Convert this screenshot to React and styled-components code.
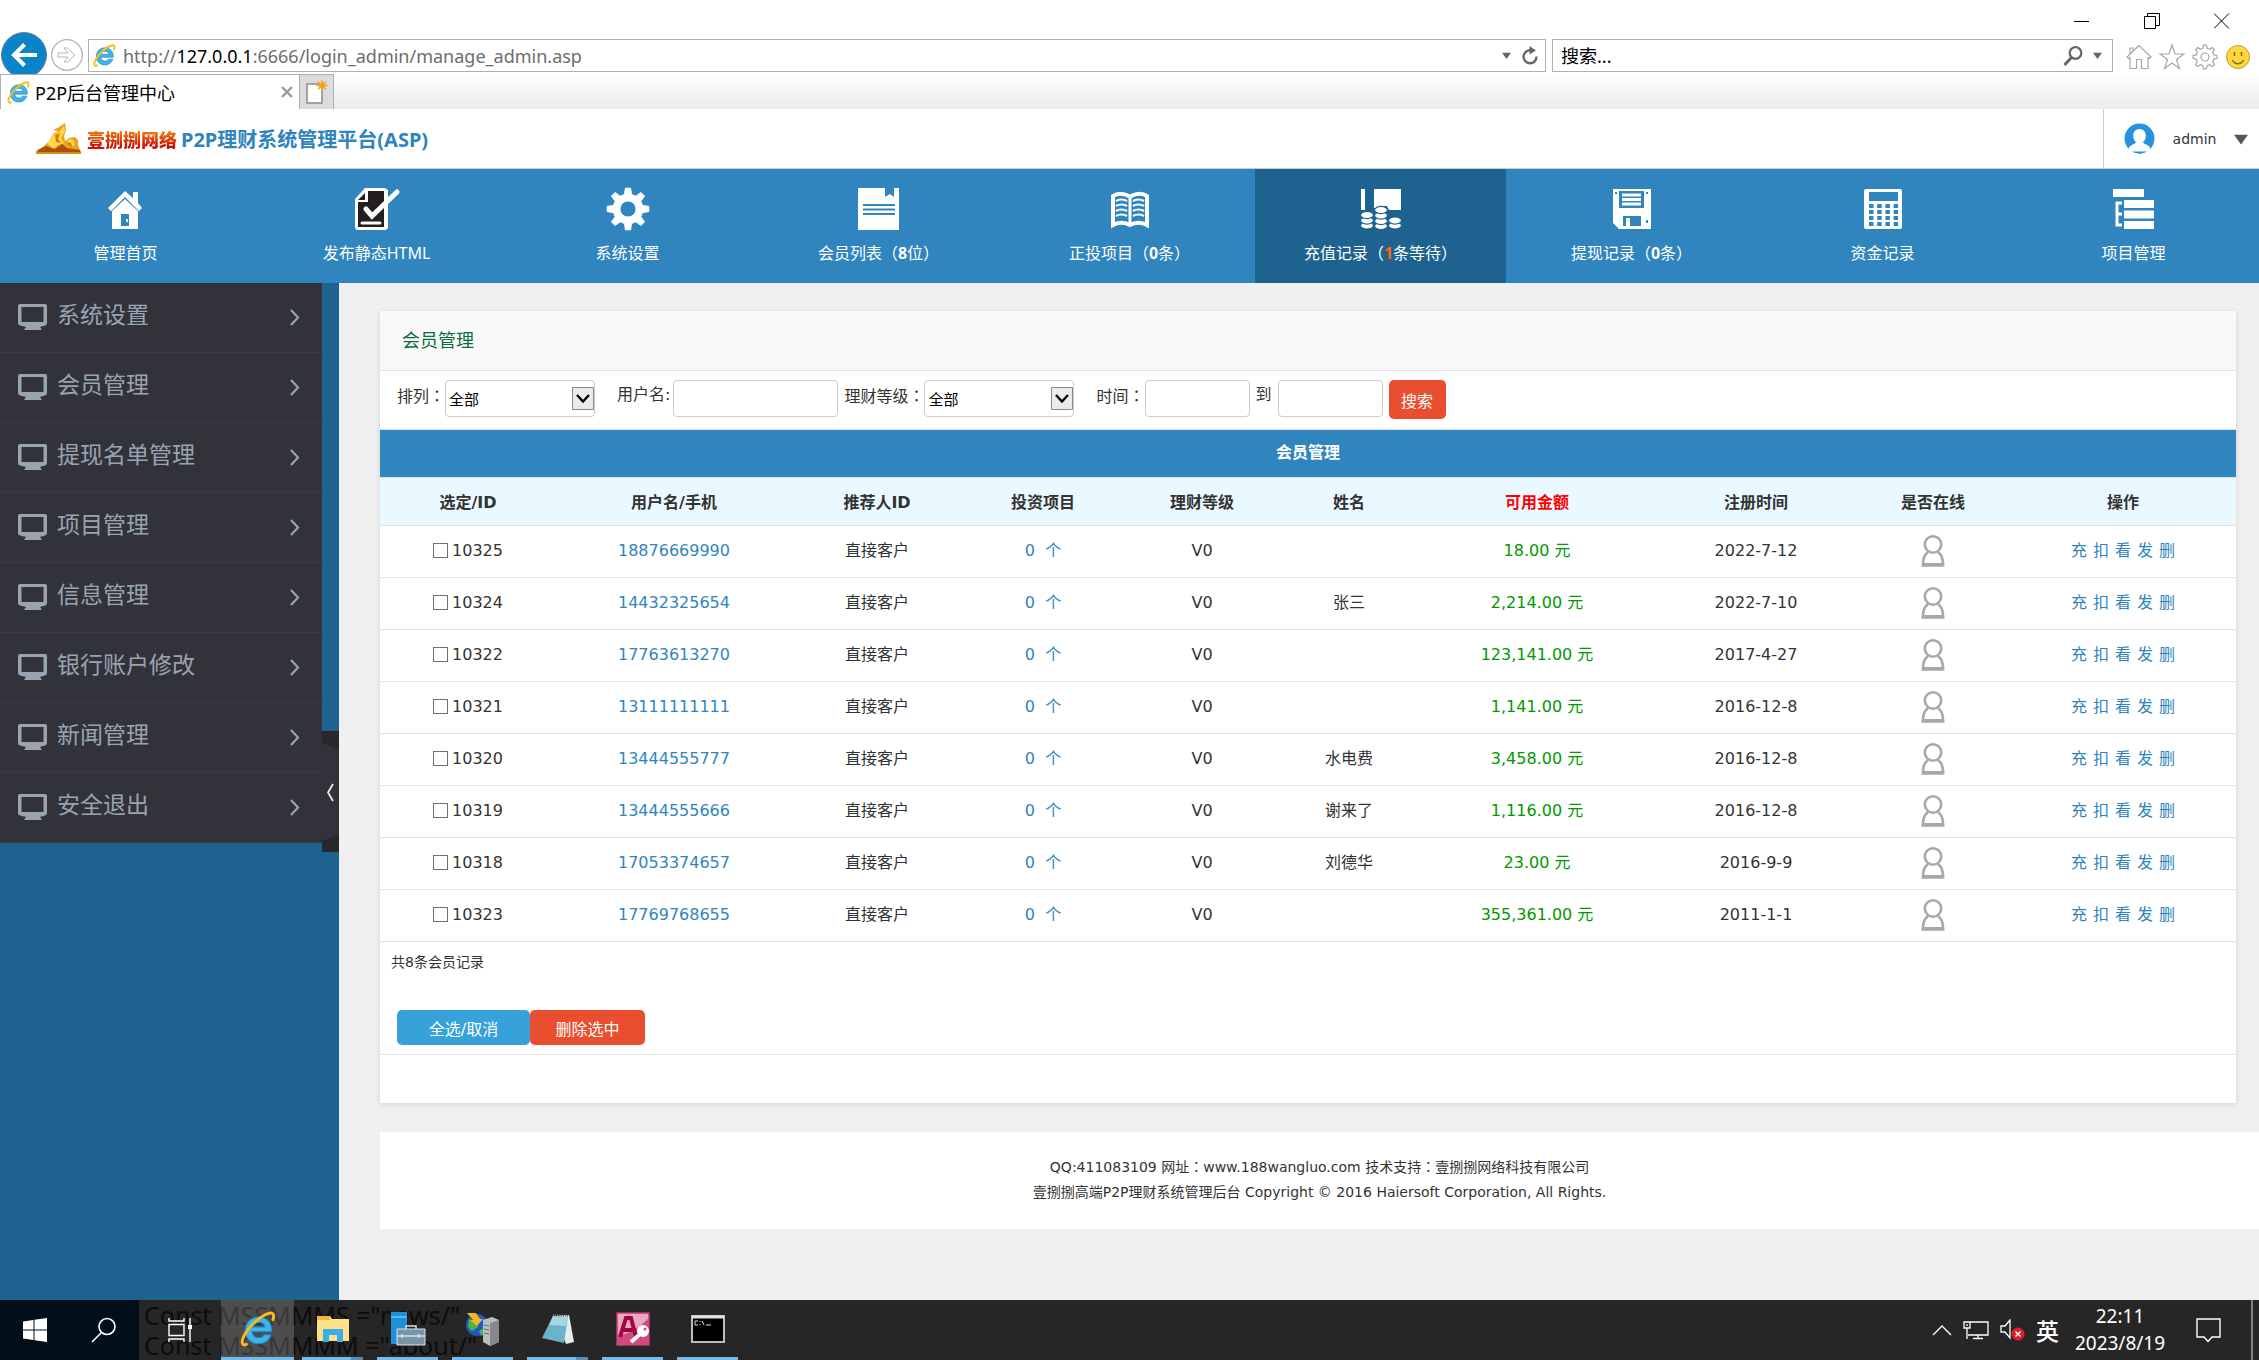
import React, { useState } from "react";
import styled, { createGlobalStyle } from "styled-components";

const GlobalStyle = createGlobalStyle`
  * {
    box-sizing: border-box;
  }

  body {
    margin: 0;
    color: #333;
    background: #f0f0f0;
    font-family: "DejaVu Sans", "Noto Sans CJK SC", sans-serif;
    font-size: 16px;
  }

  button, input, select {
    font-family: inherit;
  }

  a {
    color: #3085be;
    text-decoration: none;
  }
`;

const Page = styled.div`
  min-height: 100vh;
  display: flex;
  flex-direction: column;
`;

/* ---------- browser window ---------- */

const Chrome = styled.div`
  background: white;
  color: black;
  font-family: "Noto Sans", "Noto Sans CJK SC", sans-serif;
`;

const PlainButton = styled.button`
  display: flex;
  align-items: center;
  justify-content: center;
  padding: 0;
  border: 0;
  background: none;
  cursor: pointer;
`;

const TitleBar = styled.div`
  display: flex;
  justify-content: flex-end;
  height: 32px;
  padding: 10px 2px 0 0;
`;

const WindowButton = styled(PlainButton)`
  width: 70px;
  height: 22px;
`;

const AddressRow = styled.div`
  display: flex;
  align-items: flex-end;
  height: 42px;
  padding-left: 1px;
`;

const ForwardButton = styled(PlainButton)`
  width: 34px;
  height: 34px;
  margin: 0 4px 2px 3px;
`;

const AddressBox = styled.div`
  flex: 1;
  display: flex;
  align-items: center;
  height: 33px;
  margin-bottom: 2px;
  padding: 0 6px 0 4px;
  border: 1px solid #b0b0b0;
`;

const AddressText = styled.div`
  flex: 1;
  margin-left: 7px;
  color: #6d6d6d;
  font-size: 18px;
  line-height: 28px;
  white-space: nowrap;
  outline: none;
`;

const Host = styled.span`
  color: black;
`;

const AddressTools = styled.div`
  display: flex;
  align-items: center;
  gap: 10px;
`;

const SearchBox = styled(AddressBox)`
  flex: 0 0 561px;
  margin-left: 6px;
  padding: 0 10px 0 8px;
`;

const SearchInput = styled.input`
  flex: 1;
  padding: 0;
  border: 0;
  outline: none;
  background: none;
  font-size: 18px;

  &::placeholder {
    color: black;
    opacity: 1;
  }
`;

const BrowserTools = styled.div`
  display: flex;
  gap: 7px;
  height: 37px;
  padding: 0 8px 0 13px;
`;

const TabRow = styled.div`
  display: flex;
  height: 35px;
  background: linear-gradient(white, #ebebeb);
`;

const Tab = styled.div`
  display: flex;
  align-items: center;
  width: 300px;
  padding: 0 6px;
  border: 1px solid #b0b0b0;
  border-bottom: 0;
  background: white;
  font-size: 18px;
`;

const TabTitle = styled.span`
  flex: 1;
  margin-left: 5px;
`;

const NewTab = styled(PlainButton)`
  width: 34px;
  border: 1px solid #b0b0b0;
  border-width: 1px 1px 0 0;
  background: #dcdcdc;
`;

/* ---------- site header ---------- */

const Header = styled.header`
  display: flex;
  align-items: stretch;
  justify-content: space-between;
  height: 60px;
  padding-left: 36px;
  border-bottom: 1px solid #ccc;
  background: white;
`;

const Brand = styled.a`
  display: flex;
  align-items: center;
  font-family: "Noto Sans", "Noto Sans CJK SC", sans-serif;
  font-weight: 700;
`;

const BrandName = styled.span`
  margin: 0 4px 0 6px;
  color: transparent;
  background: linear-gradient(#f08010 20%, #d01005 75%);
  background-clip: text;
  font-size: 18px;
  font-weight: 900;
`;

const BrandTitle = styled.span`
  color: #2f84be;
  font-size: 20px;
`;

const User = styled(PlainButton)`
  width: 156px;
  padding: 0 11px 0 20px;
  border-left: 1px solid #ccc;
  justify-content: space-between;
  color: #333;
  font-size: 14px;
`;

const Nav = styled.nav`
  display: flex;
  height: 114px;
  background: #3085be;
`;

const NavItem = styled.a`
  flex: 1;
  display: flex;
  flex-direction: column;
  align-items: center;
  gap: 11px;
  padding-top: 19px;
  color: white;
  background: ${(props) => (props.$active ? "#1e628f" : "transparent")};
  font-family: "Noto Sans", "Noto Sans CJK SC", sans-serif;
  line-height: 24px;
  white-space: nowrap;
`;

const Count = styled.b`
  color: ${(props) => (props.$alert ? "#ff6600" : "inherit")};
`;

/* ---------- sidebar ---------- */

const Body = styled.div`
  flex: 1;
  display: flex;
`;

const Sidebar = styled.aside`
  position: relative;
  width: 339px;
  background: #1e628f;
`;

const Menu = styled.div`
  width: 322px;
  background: #32323a;
`;

const MenuItem = styled.a`
  display: flex;
  align-items: center;
  height: 70px;
  padding: 0 22px 2px 18px;
  border-bottom: 1px solid #3c3c46;
  color: #98a5b1;
  font-size: 23px;
`;

const MenuText = styled.span`
  flex: 1;
  height: 70px;
  margin-left: 10px;
  line-height: 66px;
`;

const Collapse = styled(PlainButton)`
  position: absolute;
  top: 448px;
  right: 0;
  width: 17px;
  height: 121px;
`;

/* ---------- content ---------- */

const Content = styled.main`
  flex: 1;
  padding: 28px 0 71px 41px;
`;

const Card = styled.section`
  margin: 0 23px 29px 0;
  background: white;
  box-shadow: 0 1px 6px rgba(0, 0, 0, 0.12);
`;

const CardTitle = styled.h1`
  margin: 0;
  padding-left: 22px;
  border-bottom: 1px solid #e2e2e2;
  background: #f9f9f9;
  color: #0a6c3c;
  font-size: 18px;
  font-weight: 400;
  line-height: 59px;
`;

const Filters = styled.form`
  display: flex;
  height: 59px;
  padding: 9px 17px;
  border-bottom: 1px solid #e2e2e2;
`;

const Field = styled.label`
  display: flex;
  gap: ${(props) => props.$gap || 0}px;
  margin-right: ${(props) => (props.$wide ? 22 : 6)}px;
  line-height: 30px;
  white-space: nowrap;
`;

const Colon = styled.span`
  font-family: "Noto Sans CJK TC", sans-serif;
`;

const TextInput = styled.input`
  width: ${(props) => props.$width}px;
  height: 37px;
  border: 1px solid #ccc;
  border-radius: 4px;
  background: white;
`;

const SelectBox = styled.span`
  position: relative;
  width: 150px;
  height: 37px;
`;

const Select = styled.select`
  width: 100%;
  height: 37px;
  padding: 2px 24px 0 3px;
  border: 1px solid #ccc;
  border-radius: 4px;
  appearance: none;
  background: white;
  color: black;
  font-size: 15px;
`;

const SelectArrow = styled.svg`
  position: absolute;
  top: 7px;
  right: 1px;
  pointer-events: none;
`;

const Button = styled.button`
  width: ${(props) => props.$width}px;
  height: ${(props) => (props.$tall ? 39 : 35)}px;
  padding: 0;
  border: 0;
  border-radius: 5px;
  background: ${(props) => (props.$blue ? "#36a2d9" : "#e94e2e")};
  color: white;
  font-size: 16px;
  cursor: pointer;
`;

const Table = styled.table`
  width: 100%;
  border-collapse: collapse;
  table-layout: fixed;
  text-align: center;
`;

const Caption = styled.caption`
  height: 47px;
  background: #3085be;
  color: white;
  font-weight: 700;
  line-height: 45px;
`;

const Th = styled.th`
  height: 48px;
  padding: 0 0 2px;
  border: 1px solid #e2e2e2;
  border-width: 1px 0;
  background: #eaf8ff;
  color: ${(props) => (props.$red ? "#ff0000" : "#333")};
`;

const Td = styled.td`
  height: 52px;
  padding: 0 0 2px;
  border-bottom: 1px solid #e2e2e2;
  color: ${(props) => (props.$green ? "#009900" : "#333")};
  line-height: 24px;
`;

const Check = styled.label`
  display: flex;
  align-items: center;
  justify-content: center;
  gap: 4px;
`;

const CheckInput = styled.input`
  width: 15px;
  height: 15px;
  margin: 0;
  border: 1px solid #707070;
  appearance: none;
  background: white;

  &:checked {
    background: #3085be;
  }
`;

const Actions = styled.div`
  display: flex;
  justify-content: center;
  gap: 6px;
`;

const Summary = styled.p`
  margin: 0;
  padding: 8px 11px 0;
  font-size: 14px;
  line-height: 24px;
`;

const BulkBar = styled.div`
  display: flex;
  margin-top: 36px;
  padding: 0 17px 9px;
  border-bottom: 1px solid #e2e2e2;
`;

const CardEnd = styled.div`
  height: 48px;
`;

const Footer = styled.footer`
  padding: 22px 0 24px;
  background: white;
  font-size: 14px;
  line-height: 25px;
  text-align: center;
`;

/* ---------- taskbar ---------- */

const Taskbar = styled.div`
  position: relative;
  display: flex;
  height: 60px;
  background: #262626;
  color: white;
  font-family: "Noto Sans", "Noto Sans CJK SC", sans-serif;
`;

const Behind = styled.pre`
  position: absolute;
  left: 144px;
  top: 0;
  margin: 0;
  color: #0c0c0c;
  font-family: "Noto Sans", sans-serif;
  font-size: 25px;
  line-height: 30px;
`;

const StartArea = styled.div`
  display: flex;
  gap: 10px;
  width: 139px;
  padding: 0 5px;
  background: #000f1a;
`;

const StartButton = styled(PlainButton)`
  width: 62px;
`;

const TaskView = styled(PlainButton)`
  position: relative;
  width: 82px;
`;

const TaskButton = styled(PlainButton)`
  position: relative;
  width: ${(props) => (props.$active ? 73 : 61)}px;
  margin-right: ${(props) => (props.$active ? 8 : 14)}px;
  border-bottom: 3px solid #76b9ed;
  background: ${(props) => (props.$active ? "rgba(255, 255, 255, 0.18)" : "none")};
`;

/* second window of the same program */
const Stacked = styled(TaskButton)`
  border-image: linear-gradient(to right, #76b9ed 78%, #5a8db5 78%) 3;
`;

const Tray = styled.div`
  display: flex;
  align-items: center;
  margin-left: auto;
`;

const TrayIcons = styled.div`
  display: flex;
  align-items: center;
  gap: 11px;
`;

const Lang = styled.span`
  font-size: 23px;
  font-weight: 500;
`;

const Clock = styled.div`
  width: 92px;
  margin: 0 30px 0 15px;
  font-size: 19px;
  line-height: 27px;
  text-align: center;
  white-space: nowrap;
`;

const ShowDesktop = styled(PlainButton)`
  width: 8px;
  height: 60px;
  margin-left: 30px;
  border-left: 2px solid #808080;
`;

/* ---------- icons ---------- */

const IeIcon = ({ size }) => (
  <svg width={size} height={size} viewBox="0 0 34 34">
    <path
      d="M30 19.500H11.500c.3 3.700 2.900 5.700 6 5.700 2.700 0 4.300-1 5.500-2.800h6.300C27.500 27.700 23 31 17.500 31 10.300 31 5 25.800 5 18.400 5 11 10.300 5.600 17.500 5.600c7.400 0 12.900 5.200 12.500 13.900zM11.700 15.200h12c-.5-2.700-2.900-4.400-6-4.400-3 0-5.400 1.700-6 4.400z"
      fill="#41b4e8"
      stroke="#1b87cf"
      strokeWidth="1"
    />
    <path
      d="M6 31.500C2.500 33.500.6 30 3.600 24 8 14.500 19.500 4.500 27 2.200c4.500-1.300 5.800 1.400 4 6"
      fill="none"
      stroke="#f6bd1b"
      strokeWidth="2.800"
      strokeLinecap="round"
    />
  </svg>
);

const Caret = ({ size = 9, color = "#666" }) => (
  <svg width={size} height={size} viewBox="0 0 10 10">
    <path d="M0 2h10L5 9z" fill={color} />
  </svg>
);

const BackIcon = () => (
  <svg width="46" height="42" viewBox="0 0 46 42">
    <circle cx="23" cy="23" r="22.500" fill="#0a84c8" stroke="#6b7f8c" />
    <path d="M36 23H13M23.500 12.500 13 23l10.500 10.500" fill="none" stroke="white" strokeWidth="4" />
  </svg>
);

const ForwardIcon = () => (
  <svg width="32" height="34" viewBox="0 0 32 34" fill="none" stroke="#b4b4b4">
    <circle cx="16" cy="17" r="15.300" strokeWidth="1.300" />
    <path d="M7 15h10l-4-5h3.500l7.500 7-7.500 7H13l4-5H7z" />
  </svg>
);

const ReloadIcon = () => (
  <svg width="18" height="22" viewBox="0 0 18 22">
    <path d="M15.500 11.500A6.500 6.500 0 1 1 10 5.300" fill="none" stroke="#666" strokeWidth="2.400" />
    <path d="M8.500 1v8.500l6.500-4z" fill="#666" />
  </svg>
);

const SearchIcon = () => (
  <svg width="20" height="22" viewBox="0 0 20 22" fill="none" stroke="#666">
    <circle cx="12.500" cy="8" r="5.800" strokeWidth="2.200" />
    <path d="M8.500 12.500 1.500 20" strokeWidth="3" />
  </svg>
);

const HomeOutline = () => (
  <svg width="26" height="28" viewBox="0 0 26 28" fill="none" stroke="#a6a6a6" strokeWidth="1.200">
    <path d="M13 3.500 1 15l1.500 1.500L4 15.500v11h6.500v-9h5v9H22v-11l1.500 1L25 15zM4 12V6h3v3" />
  </svg>
);

const StarOutline = () => (
  <svg width="26" height="28" viewBox="0 0 26 28" fill="none" stroke="#a6a6a6" strokeWidth="1.200">
    <path d="M13 3l3 9h9l-7.500 5.500 3 9L13 21l-7.500 5.500 3-9L1 12h9z" />
  </svg>
);

const gearPath = (cx, cy, r1, r2, teeth) => {
  const step = (Math.PI * 2) / teeth;
  const at = (a, r) => `${(cx + Math.sin(a) * r).toFixed(2)} ${(cy - Math.cos(a) * r).toFixed(2)}`;
  let d = "";
  for (let i = 0; i < teeth; i++) {
    const a = i * step;
    d += `${i ? "L" : "M"}${at(a - step * 0.3, r1)}L${at(a - step * 0.16, r2)}`;
    d += `L${at(a + step * 0.16, r2)}L${at(a + step * 0.3, r1)}`;
  }
  return d + "Z";
};

const GearOutline = () => (
  <svg width="26" height="28" viewBox="0 0 26 28" fill="none" stroke="#a6a6a6" strokeWidth="1.200">
    <path d={gearPath(13, 15, 9, 12, 8)} />
    <circle cx="13" cy="15" r="4" />
  </svg>
);

const Smiley = () => (
  <svg width="26" height="28" viewBox="0 0 26 28">
    <circle cx="13" cy="15" r="11.500" fill="#ffd83d" stroke="#b79b3e" />
    <path d="M9.500 10v4M16.500 10v4M7.500 18c2.500 5 8.500 5 11 0" fill="none" stroke="#8a6a1c" strokeWidth="1.600" />
  </svg>
);

const NewTabIcon = () => (
  <svg width="22" height="24" viewBox="0 0 22 24">
    <path d="M1 4h15v19H1z" fill="white" stroke="#8a8a8a" strokeWidth="1.500" />
    <path d={gearPath(16, 5.5, 3, 5.5, 8)} fill="#f5a21b" />
  </svg>
);

const LogoIcon = () => (
  <svg width="45" height="32" viewBox="0 0 45 32">
    <path
      d="M0 28l8-5 5-5 4-7 5-3-5-1 6-3 6-4 1 7-2 6 1 5 4-3 6-1 3 3v4l1 4 2 3v2H0z"
      fill="#eaa41d"
    />
    <path d="M11 20l6-8 6-3 5-6 1 5-4 7 3 5-6 2-5 4zM31 17l5-1 3 4-1 3-5-1z" fill="#ffd84a" />
    <path d="M19 12l5-2-2 6 3 4-5-1zM32 19l3 1 1 4-4-2z" fill="#d9771a" />
    <path d="M2 27l8-4 9 3 7-5 5 4 13 2v3H1z" fill="#a8510f" />
    <path d="M0 29h45v2H0z" fill="#d98a1a" />
  </svg>
);

const Avatar = () => (
  <svg width="31" height="31" viewBox="0 0 31 31">
    <circle cx="15.500" cy="15.500" r="15" fill="#2793dc" />
    <path
      d="M15.500 6c-4 0-6.300 3-6.300 6.800 0 3 1.300 5.200 2.800 6.500-.3 1.700-6 2.300-7.500 6.200 1 2 3.200 3.500 4.500 3.500h13c1.300 0 3.500-1.500 4.500-3.500-1.500-3.900-7.200-4.500-7.500-6.200 1.500-1.300 2.800-3.500 2.800-6.500C21.800 9 19.500 6 15.500 6z"
      fill="white"
    />
    <path d="M8 28.500h15a15 15 0 0 1-15 0z" fill="#2793dc" />
  </svg>
);

const BLUE = "#3085be";

const navIcons = {
  home: (
    <g fill="white">
      <path d="M20 3 3 20l3 3L20 9l14 14 3-3-4-5V4h-5v6z" />
      <path d="M20 11 7 23v18h26V23zM16 26h8v12h-8z" fillRule="evenodd" />
      <path d="M21 31h2v3h-2z" />
    </g>
  ),
  html: (
    <g>
      <path d="M9 0h20l3 2v38l-2 2H1l-2-2V11z" fill="white" />
      <path d="M12 3h16v36H2V14h10z" fill="#231f20" />
      <path d="M9 5v7H2z" fill="#231f20" />
      <path d="m10 21 6 7L41 4" fill="none" stroke="white" strokeWidth="5" strokeLinecap="round" />
      <path d="M6 35h18" stroke="white" strokeWidth="3" strokeLinecap="round" />
    </g>
  ),
  gear: (
    <path
      d={gearPath(21, 21, 15, 21, 8) + "M21 13a8 8 0 1 0 .01 0z"}
      fill="white"
      fillRule="evenodd"
      stroke="white"
      strokeLinejoin="round"
    />
  ),
  doc: (
    <g fill="white">
      <path d="M0 0h27v9l5-3 4 3V0h5v42H0z" />
      <path d="M5 17h32M5 21.500h32M5 26h32" stroke={BLUE} strokeWidth="2" />
    </g>
  ),
  book: (
    <g fill="none" stroke="white">
      <path d="M21 9c-5-4-13-4-17-1v29c5-3 12-3 17 0 5-3 12-3 17 0V8c-4-3-12-3-17 1z" strokeWidth="4" />
      <path d="M21 9v27" strokeWidth="3" />
      <path
        d="M7 13c3-2 8-2 11 0M7 18c3-2 8-2 11 0M7 23c3-2 8-2 11 0M7 28c3-2 8-2 11 0M24 13c3-2 8-2 11 0M24 18c3-2 8-2 11 0M24 23c3-2 8-2 11 0M24 28c3-2 8-2 11 0"
        strokeWidth="2.200"
      />
    </g>
  ),
  coins: (
    <g fill="white">
      <path d="M1 1h4v21H1zM14 1h27v21H29l-2-4h-6l-3 2h-4z" />
      {[[7, 37.5], [7, 32.5], [7, 27], [21, 38], [21, 33], [21, 27.5], [21, 22], [35, 37.5], [35, 32.5]].map(([x, y]) => (
        <ellipse key={x + "-" + y} cx={x} cy={y} rx="6.500" ry="3.600" stroke="#1e628f" strokeWidth="1.200" />
      ))}
    </g>
  ),
  floppy: (
    <g fill="white">
      <path d="M2 1h38v40H8l-6-6z" />
      <path d="M8 3h25v17H8z" fill={BLUE} />
      <path d="M11 7h19M11 11.500h19M11 16h19" stroke="white" strokeWidth="2.800" />
      <path d="M12 28h18v10H12z" fill={BLUE} />
      <path d="M15 30h4v8h-4z" />
      <path d="M4 4h2v2H4zM35 4h2v2h-2zM35 32h2v3h-2z" fill={BLUE} />
    </g>
  ),
  calc: (
    <g>
      <rect x="2" y="1" width="38" height="40" rx="2" fill="white" />
      <path d="M7 4h29v9H7z" fill={BLUE} />
      <path
        d="M7 18h30M7 24h30M7 30h30M7 36h30"
        stroke={BLUE}
        strokeWidth="4"
        strokeDasharray="4.500 3.700"
      />
    </g>
  ),
  tree: (
    <g fill="white">
      <path d="M0 1h31v8H0zM11 12h30v8H11zM11 22.500h30v8H11zM11 33h30v8H11z" />
      <path d="M9 15H4v22h5M4 26h5" fill="none" stroke="white" strokeWidth="3" />
    </g>
  ),
};

const NavIcon = ({ name }) => (
  <svg width="42" height="42" viewBox="0 0 42 42" overflow="visible">
    {navIcons[name]}
  </svg>
);

const MonitorIcon = () => (
  <svg width="29" height="26" viewBox="0 0 29 26" fill="#98a5b1">
    <path
      d="M2 0h25q2 0 2 2v17q0 2-2 2.500l-5 1.500 2 3H6l2-3-6-1.500Q0 21 0 19V2Q0 0 2 0zM3.500 3v15h22V3z"
      fillRule="evenodd"
    />
  </svg>
);

const ChevronIcon = () => (
  <svg width="10" height="18" viewBox="0 0 10 18" fill="none" stroke="#98a5b1" strokeWidth="2.200">
    <path d="m1 2 7 7.500L1 17" />
  </svg>
);

const CollapseIcon = () => (
  <svg width="17" height="121" viewBox="0 0 17 121">
    <path d="M0 0h17v121H0z" fill="#27272d" />
    <path d="M0 12l17 7v84l-17 7z" fill="#32323a" />
    <path d="m11 53-5 8.500 5 8.500" fill="none" stroke="#e6e6e6" strokeWidth="1.800" />
  </svg>
);

const PersonIcon = () => (
  <svg width="24" height="32" viewBox="0 0 24 32" fill="none" stroke="#a8a8a8" strokeWidth="2.600">
    <circle cx="12" cy="9.500" r="8.200" />
    <path d="M7 17.500C3 19 2 24 1.800 30.500h20.400C22 24 21 19 17 17.500" />
    <path d="M2 29.500h20" strokeWidth="3" />
  </svg>
);

const AppFolder = () => (
  <svg width="34" height="28" viewBox="0 0 34 28">
    <path d="M1 1h13l2 3h17v22H1z" fill="#ffe08a" />
    <path d="M1 1h13v4H1z" fill="#f3b93c" />
    <path d="M7 27V14h20v13h-6v-7h-8v7z" fill="#3aaee8" />
  </svg>
);

const AppServer = () => (
  <svg width="36" height="36" viewBox="0 0 36 36">
    <path d="M1 1h16v32H1z" fill="#1f8fdc" />
    <path d="M1 6h16" stroke="#9fd4f5" />
    <path d="M7 18h28v16H7z" fill="#7896a8" stroke="#d5e2e9" />
    <path d="M7 25h28M16 18v-3h10v3M12 23v4M29 23v4" fill="none" stroke="#d5e2e9" strokeWidth="1.500" />
  </svg>
);

const AppIis = () => (
  <svg width="36" height="36" viewBox="0 0 36 36">
    <circle cx="12" cy="14" r="11" fill="#2059c0" />
    <path d="M4 8l7 2 2 6-6 4-4-4zM14 20l5-3 3 3-6 5z" fill="#4db545" />
    <path d="M18 9l9-3 7 3v22l-9 4-7-4z" fill="#b9bec2" />
    <path d="M25 12l9-3v22l-9 4z" fill="#85898d" />
    <path d="M19 14l5 1M19 18l5 1M19 22l5 1" stroke="#666" />
    <path d="M2 2h9l4 6h3l-6 7-7-6h3z" fill="#f5b51d" />
  </svg>
);

const AppNotepad = () => (
  <svg width="34" height="32" viewBox="0 0 34 32">
    <path d="M14 3l14-1 5 27-8 2z" fill="#e6edf0" />
    <path d="M12 3l15 1-4 26-22-5z" fill="#69b4c8" />
    <path d="M12 3l15 1-2 9-17-1z" fill="#a7d6e0" />
    <path d="M12 2l15 1" stroke="#777" strokeWidth="2" strokeDasharray="1 1" />
  </svg>
);

const AppAccess = () => (
  <svg width="34" height="34" viewBox="0 0 34 34">
    <path d="M1 1h32v32H1z" fill="#e9a9c3" stroke="#c2396f" strokeWidth="1.500" />
    <path d="M1 24q16-2 32-18v27H1z" fill="#cf4a80" />
    <path d="M4 25 10 6h5l5 19M7 18h10" fill="none" stroke="#a0093f" strokeWidth="4" />
    <circle cx="27" cy="19" r="6" fill="white" />
    <path d="M23 23l-8 7" stroke="white" strokeWidth="4" />
    <circle cx="29" cy="17" r="1.500" fill="#cf4a80" />
  </svg>
);

const AppConsole = () => (
  <svg width="34" height="28" viewBox="0 0 34 28">
    <path d="M1 1h32v26H1z" fill="black" stroke="#b5bdc2" strokeWidth="2" />
    <path d="M1 2h32" stroke="#dbe3e8" strokeWidth="3" />
    <path d="M7 6H4v4h3M9 6v1M9 9v1M11 6l2 4M15 10h5" fill="none" stroke="#ddd" />
  </svg>
);

/* ---------- data ---------- */

const navItems = [
  { icon: "home", text: "管理首页" },
  { icon: "html", text: "发布静态HTML" },
  { icon: "gear", text: "系统设置" },
  { icon: "doc", text: "会员列表", count: 8, unit: "位" },
  { icon: "book", text: "正投项目", count: 0, unit: "条" },
  { icon: "coins", text: "充值记录", count: 1, unit: "条等待", active: true },
  { icon: "floppy", text: "提现记录", count: 0, unit: "条" },
  { icon: "calc", text: "资金记录" },
  { icon: "tree", text: "项目管理" },
];

const menuItems = [
  "系统设置",
  "会员管理",
  "提现名单管理",
  "项目管理",
  "信息管理",
  "银行账户修改",
  "新闻管理",
  "安全退出",
];

const columns = [
  { title: "选定/ID", width: 176 },
  { title: "用户名/手机", width: 236 },
  { title: "推荐人ID", width: 170 },
  { title: "投资项目", width: 162 },
  { title: "理财等级", width: 156 },
  { title: "姓名", width: 138 },
  { title: "可用金额", width: 238, red: true },
  { title: "注册时间", width: 200 },
  { title: "是否在线", width: 154 },
  { title: "操作", width: 226 },
];

const members = [
  { id: 10325, phone: "18876669990", name: "", money: "18.00", date: "2022-7-12" },
  { id: 10324, phone: "14432325654", name: "张三", money: "2,214.00", date: "2022-7-10" },
  { id: 10322, phone: "17763613270", name: "", money: "123,141.00", date: "2017-4-27" },
  { id: 10321, phone: "13111111111", name: "", money: "1,141.00", date: "2016-12-8" },
  { id: 10320, phone: "13444555777", name: "水电费", money: "3,458.00", date: "2016-12-8" },
  { id: 10319, phone: "13444555666", name: "谢来了", money: "1,116.00", date: "2016-12-8" },
  { id: 10318, phone: "17053374657", name: "刘德华", money: "23.00", date: "2016-9-9" },
  { id: 10323, phone: "17769768655", name: "", money: "355,361.00", date: "2011-1-1" },
];

const actions = ["充", "扣", "看", "发", "删"];

const apps = [
  { name: "文件资源管理器", icon: <AppFolder />, stacked: true },
  { name: "服务器管理器", icon: <AppServer /> },
  { name: "IIS", icon: <AppIis /> },
  { name: "记事本", icon: <AppNotepad />, stacked: true },
  { name: "Access", icon: <AppAccess /> },
  { name: "命令提示符", icon: <AppConsole /> },
];

/* ---------- parts ---------- */

const BrowserBar = () => (
  <Chrome>
    <TitleBar>
      <WindowButton aria-label="最小化">
        <svg width="16" height="16" viewBox="0 0 16 16" stroke="black">
          <path d="M0 8.500h15" />
        </svg>
      </WindowButton>
      <WindowButton aria-label="还原">
        <svg width="16" height="16" viewBox="0 0 16 16" fill="none" stroke="black">
          <path d="M.5 3.500h11v12H.5zM3.500 3.500v-3h12v12h-4" />
        </svg>
      </WindowButton>
      <WindowButton aria-label="关闭">
        <svg width="16" height="16" viewBox="0 0 16 16" stroke="black">
          <path d="m0 .5 15 15M15 .5l-15 15" />
        </svg>
      </WindowButton>
    </TitleBar>
    <AddressRow>
      <PlainButton aria-label="后退">
        <BackIcon />
      </PlainButton>
      <ForwardButton aria-label="前进">
        <ForwardIcon />
      </ForwardButton>
      <AddressBox>
        <IeIcon size={23} />
        <AddressText role="textbox" aria-label="地址" contentEditable suppressContentEditableWarning>
          http://<Host>127.0.0.1</Host>:6666/login_admin/manage_admin.asp
        </AddressText>
        <AddressTools>
          <Caret />
          <ReloadIcon />
        </AddressTools>
      </AddressBox>
      <SearchBox>
        <SearchInput aria-label="搜索" placeholder="搜索..." />
        <AddressTools>
          <SearchIcon />
          <Caret />
        </AddressTools>
      </SearchBox>
      <BrowserTools>
        <PlainButton aria-label="主页"><HomeOutline /></PlainButton>
        <PlainButton aria-label="收藏"><StarOutline /></PlainButton>
        <PlainButton aria-label="工具"><GearOutline /></PlainButton>
        <PlainButton aria-label="反馈"><Smiley /></PlainButton>
      </BrowserTools>
    </AddressRow>
    <TabRow>
      <Tab>
        <IeIcon size={23} />
        <TabTitle>P2P后台管理中心</TabTitle>
        <PlainButton aria-label="关闭选项卡">
          <svg width="12" height="12" viewBox="0 0 12 12" stroke="#9a9a9a" strokeWidth="2.400">
            <path d="m1 1 10 10M11 1 1 11" />
          </svg>
        </PlainButton>
      </Tab>
      <NewTab aria-label="新建选项卡">
        <NewTabIcon />
      </NewTab>
    </TabRow>
  </Chrome>
);

const SelectField = ({ label }) => (
  <Field $wide>
    <span>
      {label}
      <Colon>：</Colon>
    </span>
    <SelectBox>
      <Select>
        <option>全部</option>
      </Select>
      <SelectArrow width="22" height="23" viewBox="0 0 22 23">
        <path d="M.5.500h21v22H.5z" fill="#ebebeb" stroke="#8a8a8a" />
        <path d="m5 8 6 6.500L17 8" fill="none" stroke="black" strokeWidth="2.400" />
      </SelectArrow>
    </SelectBox>
  </Field>
);

const FilterBar = () => (
  <Filters onSubmit={(e) => e.preventDefault()}>
    <SelectField label="排列" />
    <Field $gap={3}>
      <span>用户名:</span>
      <TextInput $width={165} />
    </Field>
    <SelectField label="理财等级" />
    <Field>
      <span>
        时间<Colon>：</Colon>
      </span>
      <TextInput $width={105} />
    </Field>
    <Field $gap={6}>
      <span>到</span>
      <TextInput $width={105} />
    </Field>
    <Button $width={57} $tall>
      搜索
    </Button>
  </Filters>
);

const MemberTable = ({ checked, toggle }) => (
  <Table>
    <Caption>会员管理</Caption>
    <colgroup>
      {columns.map((col) => (
        <col key={col.title} width={col.width} />
      ))}
    </colgroup>
    <thead>
      <tr>
        {columns.map((col) => (
          <Th key={col.title} $red={col.red}>
            {col.title}
          </Th>
        ))}
      </tr>
    </thead>
    <tbody>
      {members.map((m) => (
        <tr key={m.id}>
          <Td>
            <Check>
              <CheckInput type="checkbox" checked={checked.includes(m.id)} onChange={() => toggle(m.id)} />
              {m.id}
            </Check>
          </Td>
          <Td>
            <a href="#member">{m.phone}</a>
          </Td>
          <Td>直接客户</Td>
          <Td>
            <a href="#projects">0&nbsp; 个</a>
          </Td>
          <Td>V0</Td>
          <Td>{m.name}</Td>
          <Td $green>{m.money} 元</Td>
          <Td>{m.date}</Td>
          <Td>
            <Actions>
              <PersonIcon />
            </Actions>
          </Td>
          <Td>
            <Actions>
              {actions.map((a) => (
                <a key={a} href="#action">
                  {a}
                </a>
              ))}
            </Actions>
          </Td>
        </tr>
      ))}
    </tbody>
  </Table>
);

const WindowsTaskbar = () => (
  <Taskbar>
    <Behind>{'Const MSSMMMS ="news/"\nConst MSSMMMM ="about/"'}</Behind>
    <StartArea>
      <StartButton aria-label="开始">
        <svg width="24" height="24" viewBox="0 0 24 24" fill="white">
          <path d="M0 3.500 10.500 2v9.500H0zM11.500 1.800 24 0v11.500H11.500zM0 12.500h10.500V22L0 20.500zM11.500 12.500H24V24l-12.500-1.800z" />
        </svg>
      </StartButton>
      <StartButton aria-label="搜索">
        <svg width="26" height="26" viewBox="0 0 26 26" fill="none" stroke="white" strokeWidth="1.600">
          <circle cx="16" cy="9.500" r="8" />
          <path d="M10.500 15.500 1 25" />
        </svg>
      </StartButton>
    </StartArea>
    <TaskView aria-label="任务视图">
      <svg width="24" height="24" viewBox="0 0 24 24" fill="none" stroke="white" strokeWidth="1.400">
        <path d="M1 0v3h15V0M1 6.500h15v11H1zM1 24v-3h15v3M22 0v24" />
        <path d="M20 7h4v4h-4z" fill="white" stroke="none" />
      </svg>
    </TaskView>
    <TaskButton $active aria-label="Internet Explorer">
      <IeIcon size={36} />
    </TaskButton>
    {apps.map((app) => {
      const AppButton = app.stacked ? Stacked : TaskButton;
      return (
        <AppButton key={app.name} aria-label={app.name}>
          {app.icon}
        </AppButton>
      );
    })}
    <Tray>
      <TrayIcons>
        <svg width="20" height="12" viewBox="0 0 20 12" fill="none" stroke="white" strokeWidth="1.400">
          <path d="m1 11 9-9 9 9" />
        </svg>
        <svg width="26" height="20" viewBox="0 0 26 20" fill="none" stroke="white" strokeWidth="1.300">
          <path d="M7 2h18v13H5M1 2h6v6H1zM4 8v11M10 18.500h10M15 15v3.500M4 4v2" />
        </svg>
        <svg width="25" height="22" viewBox="0 0 25 22">
          <path d="M1 7h4l5-6v18l-5-6H1z" fill="none" stroke="white" strokeWidth="1.300" />
          <circle cx="18" cy="15" r="6.500" fill="#dc1f2e" />
          <path d="m15.500 12.500 5 5m0-5-5 5" stroke="white" strokeWidth="1.300" />
        </svg>
        <Lang>英</Lang>
      </TrayIcons>
      <Clock>
        22:11
        <br />
        2023/8/19
      </Clock>
      <svg width="25" height="25" viewBox="0 0 25 25" fill="none" stroke="white" strokeWidth="1.400">
        <path d="M1 1h23v18h-8l-4 4.500L8 19H1z" />
      </svg>
      <ShowDesktop aria-label="显示桌面" />
    </Tray>
  </Taskbar>
);

const App = () => {
  const [checked, setChecked] = useState([]);

  const toggle = (id) =>
    setChecked(checked.includes(id) ? checked.filter((c) => c !== id) : [...checked, id]);

  const toggleAll = () => setChecked(checked.length ? [] : members.map((m) => m.id));

  return (
    <Page>
      <GlobalStyle />
      <BrowserBar />
      <Header>
        <Brand href="#home">
          <LogoIcon />
          <BrandName>壹捌捌网络</BrandName>
          <BrandTitle>P2P理财系统管理平台(ASP)</BrandTitle>
        </Brand>
        <User>
          <Avatar />
          admin
          <Caret size={14} color="#555" />
        </User>
      </Header>
      <Nav>
        {navItems.map((item) => (
          <NavItem key={item.icon} href={"#" + item.icon} $active={item.active}>
            <NavIcon name={item.icon} />
            <span>
              {item.text}
              {item.unit && (
                <>
                  （<Count $alert={item.active}>{item.count}</Count>
                  {item.unit}）
                </>
              )}
            </span>
          </NavItem>
        ))}
      </Nav>
      <Body>
        <Sidebar>
          <Menu>
            {menuItems.map((text) => (
              <MenuItem key={text} href="#menu">
                <MonitorIcon />
                <MenuText>{text}</MenuText>
                <ChevronIcon />
              </MenuItem>
            ))}
          </Menu>
          <Collapse aria-label="收起菜单">
            <CollapseIcon />
          </Collapse>
        </Sidebar>
        <Content>
          <Card>
            <CardTitle>会员管理</CardTitle>
            <FilterBar />
            <MemberTable checked={checked} toggle={toggle} />
            <Summary>共8条会员记录</Summary>
            <BulkBar>
              <Button $width={133} $blue onClick={toggleAll}>
                全选/取消
              </Button>
              <Button $width={115}>删除选中</Button>
            </BulkBar>
            <CardEnd />
          </Card>
          <Footer>
            QQ:411083109 网址<Colon>：</Colon>www.188wangluo.com 技术支持<Colon>：</Colon>壹捌捌网络科技有限公司
            <br />
            壹捌捌高端P2P理财系统管理后台 Copyright © 2016 Haiersoft Corporation, All Rights.
          </Footer>
        </Content>
      </Body>
      <WindowsTaskbar />
    </Page>
  );
};

export default App;
